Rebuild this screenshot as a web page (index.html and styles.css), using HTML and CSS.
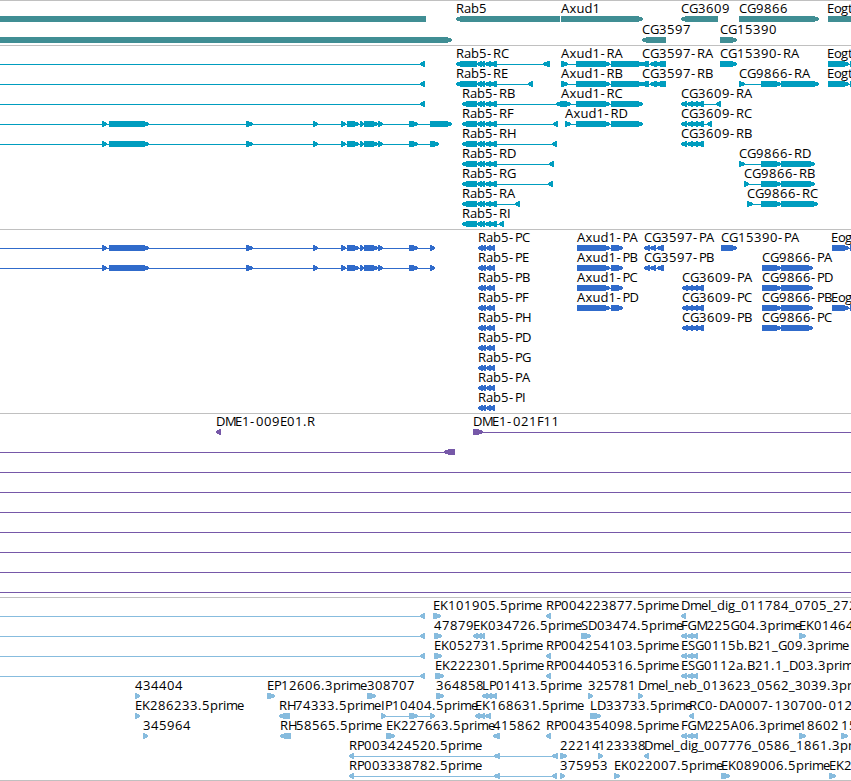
FILE: index.html
```html
<!DOCTYPE html>
<html lang="en">
<head>
  <meta charset="UTF-8">
  <title>Genome Browser</title>
  <link rel="stylesheet" href="styles.css">
</head>
<body>
  <div class="browser">
    <svg class="track genes" id="genes"></svg>
    <svg class="track transcripts" id="transcripts"></svg>
    <svg class="track cds" id="cds"></svg>
    <svg class="track clones" id="clones"></svg>
    <svg class="track ests" id="ests"></svg>
  </div>
  <script src="script.js"></script>
</body>
</html>
```
FILE: styles.css
```css
body {
  margin: 0;
  background-color: #fff;
  overflow: hidden;
}

.browser {
  display: flex;
  flex-direction: column;
  width: 851px;
  height: 781px;
  box-sizing: border-box;
  border-bottom: 1px solid #c0c0c0;
}

/* every track starts with a thin separator */
.track {
  display: block;
  flex: none;
  box-sizing: border-box;
  width: 100%;
  height: 184px;
  border-top: 1px solid #c0c0c0;
  overflow: hidden;
}

.track path {
  shape-rendering: crispEdges;
}

.track text {
  font-family: "Open Sans", "DejaVu Sans", sans-serif;
  font-size: 13px;
  fill: #000;
  white-space: pre;
}

/* track colors */
.genes {
  height: 45px;
  fill: #408e94;
}

.transcripts {
  fill: #009dbf;
}

.cds {
  fill: #306bcb;
}

.clones {
  fill: #7658a8;
}

.ests {
  height: 183px;
  fill: #87bcde;
}
```
FILE: script.js
```js
const WIDTH = 851;
const NS = 'http://www.w3.org/2000/svg';

// label advance widths, anything not listed is 8px
const advances = { A: 8.5, D: 9, E: 7, F: 6.5, G: 9, I: 4, L: 7, M: 10, P: 7, S: 7, '-': 6, '.': 4, _: 6, a: 7, e: 7, g: 7, i: 3, l: 3, m: 11, o: 7, r: 5, t: 5, x: 7 };

// exon groups shared by several features
const upstream = [[102, 107], [109, 149], [246, 253], [313, 318], [341, 346], [347, 359], [360, 364], [364, 378], [378, 383], [409, 418]];
const rab = [[477, 482], [480, 485], [485, 491], [490, 497]];
const rabCds = [[478, 483], [481, 486], [486, 491], [489, 495]];
const axud = [[576, 610], [611, 643]];
const cg3597 = [[641, 649], [650, 657], [656, 666]];
const cg3609 = [[681, 687], [687, 693], [692, 698], [697, 704]];
const cg3609Cds = [[682, 688], [687, 693], [692, 698], [697, 704]];
const triple = [[681, 687], [687, 693], [692, 698]];
const eogt = [[828, 849], [850, 870]];

// [row, label, label x, strand, blocks, line start, line end]
const tracks = {
  genes: [
    [0, '', 0, '<', [[-20, 426]]],
    [0, 'Rab5', 456, '<', [[456, 560]]],
    [0, 'Axud1', 561, '>', [[561, 643]]],
    [0, 'CG3609', 681, '<', [[681, 718]]],
    [0, 'CG9866', 739, '>', [[739, 819]]],
    [0, 'Eogt', 827, '>', [[828, 870]]],
    [1, '', 0, '>', [[-20, 452]]],
    [1, 'CG3597', 642, '<', [[642, 666]]],
    [1, 'CG15390', 720, '>', [[720, 737]]]
  ],
  transcripts: [
    [0, '', 0, '<', [[420, 425]], 0],
    [1, '', 0, '<', [[420, 425]], 0],
    [2, '', 0, '<', [[420, 425]], 0],
    [3, '', 0, '>', [...upstream, [430, 452]], 0],
    [4, '', 0, '>', [...upstream, [430, 439]], 0],
    [0, 'Rab5-RC', 456, '<', [[456, 477], ...rab, [543, 550]]],
    [1, 'Rab5-RE', 456, '<', [[456, 477], ...rab, [528, 533]]],
    [2, 'Rab5-RB', 462, '<', [[462, 477], ...rab, [556, 562]]],
    [3, 'Rab5-RF', 462, '<', [[462, 477], ...rab, [553, 558]]],
    [4, 'Rab5-RH', 462, '<', [[462, 477], ...rab, [552, 557]]],
    [5, 'Rab5-RD', 462, '<', [[462, 477], ...rab, [549, 554]]],
    [6, 'Rab5-RG', 462, '<', [[462, 477], ...rab, [548, 553]]],
    [7, 'Rab5-RA', 462, '<', [[462, 477], ...rab, [515, 520]]],
    [8, 'Rab5-RI', 462, '<', [[462, 477], ...rab, [499, 504]]],
    [0, 'Axud1-RA', 561, '>', [[561, 568], ...axud]],
    [1, 'Axud1-RB', 561, '>', [[561, 568], ...axud]],
    [2, 'Axud1-RC', 561, '>', [[561, 571], ...axud]],
    [3, 'Axud1-RD', 565, '>', [[565, 571], ...axud]],
    [0, 'CG3597-RA', 642, '<', cg3597],
    [1, 'CG3597-RB', 642, '<', cg3597],
    [0, 'CG15390-RA', 720, '>', [[720, 737]]],
    [2, 'CG3609-RA', 681, '<', [...cg3609, [716, 721]]],
    [3, 'CG3609-RC', 681, '<', [...cg3609, [707, 712]]],
    [4, 'CG3609-RB', 681, '<', cg3609],
    [1, 'CG9866-RA', 739, '>', [[739, 745], [761, 781], [781, 819]]],
    [5, 'CG9866-RD', 739, '>', [[739, 745], [761, 781], [781, 815]]],
    [6, 'CG9866-RB', 744, '>', [[744, 749], [761, 781], [781, 815]]],
    [7, 'CG9866-RC', 747, '>', [[747, 753], [761, 781], [781, 818]]],
    [0, 'Eogt', 827, '>', eogt],
    [1, 'Eogt', 827, '>', eogt]
  ],
  cds: [
    [0, '', 0, '>', [...upstream, [430, 435]], 0],
    [1, '', 0, '>', [...upstream, [430, 435]], 0],
    ...['PC', 'PE', 'PB', 'PF', 'PH', 'PD', 'PG', 'PA', 'PI'].map((p, i) => [i, 'Rab5-' + p, 478, '<', rabCds]),
    ...['PA', 'PB', 'PC', 'PD'].map((p, i) => [i, 'Axud1-' + p, 577, '>', [[577, 610], [611, 623]]]),
    ...['PA', 'PB'].map((p, i) => [i, 'CG3597-' + p, 644, '<', [[644, 650], [650, 656], [657, 664]]]),
    ...['PA', 'PC', 'PB'].map((p, i) => [i + 2, 'CG3609-' + p, 682, '<', cg3609Cds]),
    ...['PA', 'PD', 'PB', 'PC'].map((p, i) => [i + 1, 'CG9866-' + p, 762, '>', [[762, 781], [781, 813]]]),
    [0, 'CG15390-PA', 721, '>', [[721, 737]]],
    [0, 'Eog', 831, '>', [[832, 849], [850, 870]]],
    [3, 'Eog', 831, '>', [[832, 849], [850, 870]]]
  ],
  clones: [
    [0, 'DME1-009E01.R', 216, '<', [[216, 221]]],
    [0, 'DME1-021F11', 473, '>', [[473, 483]], 473, WIDTH],
    [1, '', 0, '<', [[444, 455]], 0],
    ...[2, 3, 4, 5, 6, 7, 8].map(row => [row, '', 0, '<', [], 0, WIDTH])
  ],
  ests: [
    ...[0, 1, 2, 3].map(row => [row, '', 0, '<', [[420, 425]], 0]),
    [0, 'EK101905.5prime', 433, '>', [[433, 441]]],
    [0, 'RP004223877.5prime', 546, '<', [[546, 551]]],
    [0, 'Dmel_dig_011784_0705_272', 681, '<', [[681, 686]]],
    [1, '47879', 434, '>', [[434, 442]]],
    [1, 'EK034726.5prime', 473, '<', [[473, 478], [477, 482], [480, 485]]],
    [1, 'SD03474.5prime', 581, '>', [[581, 591]]],
    [1, 'FGM225G04.3prime', 681, '<', triple],
    [1, 'EK01464', 799, '>', [[799, 806]]],
    [2, 'EK052731.5prime', 434, '>', [[434, 442]]],
    [2, 'RP004254103.5prime', 546, '<', [[546, 551]]],
    [2, 'ESG0115b.B21_G09.3prime', 681, '<', triple],
    [3, 'EK222301.5prime', 435, '>', [[435, 444]]],
    [3, 'RP004405316.5prime', 546, '<', [[546, 551]]],
    [3, 'ESG0112a.B21.1_D03.3prime', 681, '<', triple],
    [4, '434404', 135, '>', [[135, 140]]],
    [4, 'EP12606.3prime', 267, '>', [[267, 275]]],
    [4, '308707', 367, '>', [[367, 376]]],
    [4, '364858', 436, '>', [[436, 444]]],
    [4, 'LP01413.5prime', 482, '<', [[482, 488], [486, 492], [491, 497]]],
    [4, '325781', 588, '>', [[588, 593]]],
    [4, 'Dmel_neb_013623_0562_3039.3pr', 638, '>', [[638, 643]]],
    [5, 'EK286233.5prime', 135, '>', [[135, 140]]],
    [5, 'RH74333.5prime', 279, '<', [[279, 290]]],
    [5, 'IP10404.5prime', 381, '>', [[381, 386], [409, 418], [430, 435]]],
    [5, 'EK168631.5prime', 475, '<', [[475, 480], [479, 485], [485, 491]]],
    [5, 'LD33733.5prime', 590, '>', [[590, 601]]],
    [5, 'RC0-DA0007-130700-012', 689, '<', [[689, 694]]],
    [6, '345964', 143, '>', [[143, 148]]],
    [6, 'RH58565.5prime', 280, '<', [[280, 291]]],
    [6, 'EK227663.5prime', 386, '>', [[386, 395]]],
    [6, '415862', 493, '<', [[493, 500]]],
    [6, 'RP004354098.5prime', 546, '<', [[546, 551]]],
    [6, 'FGM225A06.3prime', 681, '<', triple],
    [6, '18602', 799, '>', [[799, 806]]],
    [6, '15', 841, '>', [[841, 848]]],
    [7, 'RP003424520.5prime', 349, '<', [[349, 354], [494, 500], [552, 558]]],
    [7, '22214', 560, '>', [[560, 567]]],
    [7, '123338', 598, '>', [[598, 603]]],
    [7, 'Dmel_dig_007776_0586_1861.3pr', 644, '<', [[644, 649]]],
    [8, 'RP003338782.5prime', 349, '<', [[349, 354], [494, 500], [552, 557]]],
    [8, '375953', 560, '>', [[560, 565]]],
    [8, 'EK022007.5prime', 614, '>', [[614, 620]]],
    [8, 'EK089006.5prime', 721, '>', [[721, 730]]],
    [8, 'EK2', 829, '>', [[829, 836]]]
  ]
};

function add(parent, name, attrs) {
  const el = document.createElementNS(NS, name);
  for (const key in attrs) el.setAttribute(key, attrs[key]);
  parent.appendChild(el);
  return el;
}

// 6px high block with a pointed end
function arrow(a, b, top, strand) {
  const dir = strand === '>' ? 1 : -1;
  const tail = strand === '>' ? a : b;
  const tip = strand === '>' ? b : a;
  const neck = tip - dir * Math.min(5, b - a - 1);
  return `M${tail} ${top}H${neck}L${tip} ${top + 2}V${top + 4}L${neck} ${top + 6}H${tail}Z`;
}

// x of every glyph in a label
function glyphPositions(label, x) {
  const list = [];
  for (const ch of label) {
    list.push(x);
    x += advances[ch] ?? 8;
  }
  return list.join(' ');
}

function drawTrack(id, features) {
  const svg = document.getElementById(id);
  const step = id === 'genes' ? 21 : 20;

  for (const [row, label, x, strand, blocks, from, to] of features) {
    const top = 15 + row * step;
    const start = from ?? blocks[0][0];
    const end = to ?? blocks[blocks.length - 1][1];

    if (blocks.length !== 1 || from !== undefined) {
      add(svg, 'rect', { x: start, y: top + 3, width: end - start, height: 1 });
    }
    add(svg, 'path', { d: blocks.map(([a, b]) => arrow(a, b, top, strand)).join('') });

    if (label) {
      add(svg, 'text', { x: glyphPositions(label, x), y: top - 3 }).textContent = label;
    }
  }
}

for (const id in tracks) drawTrack(id, tracks[id]);
```
